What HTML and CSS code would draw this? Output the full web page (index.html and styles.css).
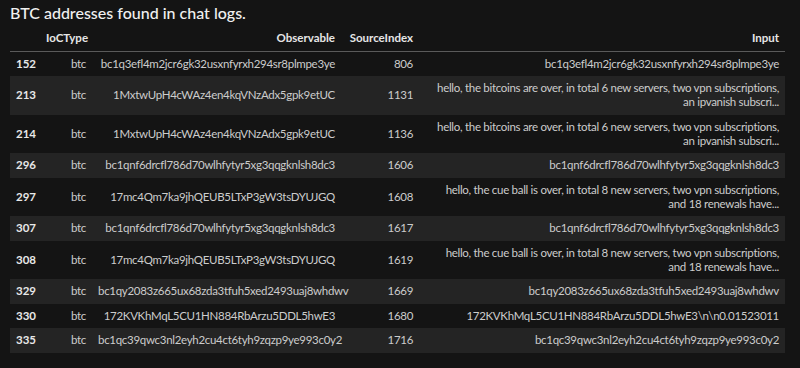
FILE: index.html
```html
<!DOCTYPE html>
<html>
<head>
<meta charset="utf-8">
<link rel="stylesheet" href="styles.css">
</head>
<body>
<div class="title">BTC addresses found in chat logs.</div>
<table class="df">
  <colgroup>
    <col class="c-idx"><col class="c-type"><col class="c-obs"><col class="c-src"><col class="c-in">
  </colgroup>
  <thead>
    <tr><th></th><th>IoCType</th><th>Observable</th><th>SourceIndex</th><th>Input</th></tr>
  </thead>
  <tbody>
    <tr><th>152</th><td>btc</td><td>bc1q3efl4m2jcr6gk32usxnfyrxh294sr8plmpe3ye</td><td>806</td><td>bc1q3efl4m2jcr6gk32usxnfyrxh294sr8plmpe3ye</td></tr>
    <tr><th>213</th><td>btc</td><td>1MxtwUpH4cWAz4en4kqVNzAdx5gpk9etUC</td><td>1131</td><td>hello, the bitcoins are over, in total 6 new servers, two vpn subscriptions,<br>an ipvanish subscri...</td></tr>
    <tr><th>214</th><td>btc</td><td>1MxtwUpH4cWAz4en4kqVNzAdx5gpk9etUC</td><td>1136</td><td>hello, the bitcoins are over, in total 6 new servers, two vpn subscriptions,<br>an ipvanish subscri...</td></tr>
    <tr><th>296</th><td>btc</td><td>bc1qnf6drcfl786d70wlhfytyr5xg3qqgknlsh8dc3</td><td>1606</td><td>bc1qnf6drcfl786d70wlhfytyr5xg3qqgknlsh8dc3</td></tr>
    <tr><th>297</th><td>btc</td><td>17mc4Qm7ka9jhQEUB5LTxP3gW3tsDYUJGQ</td><td>1608</td><td>hello, the cue ball is over, in total 8 new servers, two vpn subscriptions,<br>and 18 renewals have...</td></tr>
    <tr><th>307</th><td>btc</td><td>bc1qnf6drcfl786d70wlhfytyr5xg3qqgknlsh8dc3</td><td>1617</td><td>bc1qnf6drcfl786d70wlhfytyr5xg3qqgknlsh8dc3</td></tr>
    <tr><th>308</th><td>btc</td><td>17mc4Qm7ka9jhQEUB5LTxP3gW3tsDYUJGQ</td><td>1619</td><td>hello, the cue ball is over, in total 8 new servers, two vpn subscriptions,<br>and 18 renewals have...</td></tr>
    <tr><th>329</th><td>btc</td><td>bc1qy2083z665ux68zda3tfuh5xed2493uaj8whdwv</td><td>1669</td><td>bc1qy2083z665ux68zda3tfuh5xed2493uaj8whdwv</td></tr>
    <tr><th>330</th><td>btc</td><td>172KVKhMqL5CU1HN884RbArzu5DDL5hwE3</td><td>1680</td><td>172KVKhMqL5CU1HN884RbArzu5DDL5hwE3\n\n0.01523011</td></tr>
    <tr><th>335</th><td>btc</td><td>bc1qc39qwc3nl2eyh2cu4ct6tyh9zqzp9ye993c0y2</td><td>1716</td><td>bc1qc39qwc3nl2eyh2cu4ct6tyh9zqzp9ye993c0y2</td></tr>
  </tbody>
</table>
</body>
</html>
```
FILE: styles.css
```css
html, body {
  margin: 0;
  padding: 0;
  background: #141414;
}
body {
  padding: 0 10px;
  font-family: Lato, "Open Sans", sans-serif;
  color: #cccccc;
}
.title {
  font-size: 16px;
  line-height: 26px;
  height: 26px;
  color: #f0f0f0;
  font-weight: 500;
}
.df {
  width: 775px;
  table-layout: fixed;
  border-collapse: collapse;
  border-spacing: 0;
  font-size: 11.5px;
  line-height: 14px;
}
.c-idx { width: 30px; }
.c-type { width: 52px; }
.c-obs { width: 249px; }
.c-src { width: 78px; }
.c-in { width: 366px; }
.df thead th {
  height: 25px;
  padding: 0 6px;
  box-sizing: border-box;
  text-align: right;
  font-weight: 700;
  color: #e6e6e6;
  border-bottom: 1px solid #5a5a5a;
  vertical-align: middle;
}
.df td, .df tbody th {
  padding: 5.25px 6px;
  text-align: right;
  vertical-align: middle;
  white-space: nowrap;
}
.df td {
  letter-spacing: -0.3px;
}
.df tbody th {
  text-align: left;
  font-weight: 700;
  color: #e8e8e8;
}
.df tbody tr:nth-child(even) {
  background: #242424;
}
```
